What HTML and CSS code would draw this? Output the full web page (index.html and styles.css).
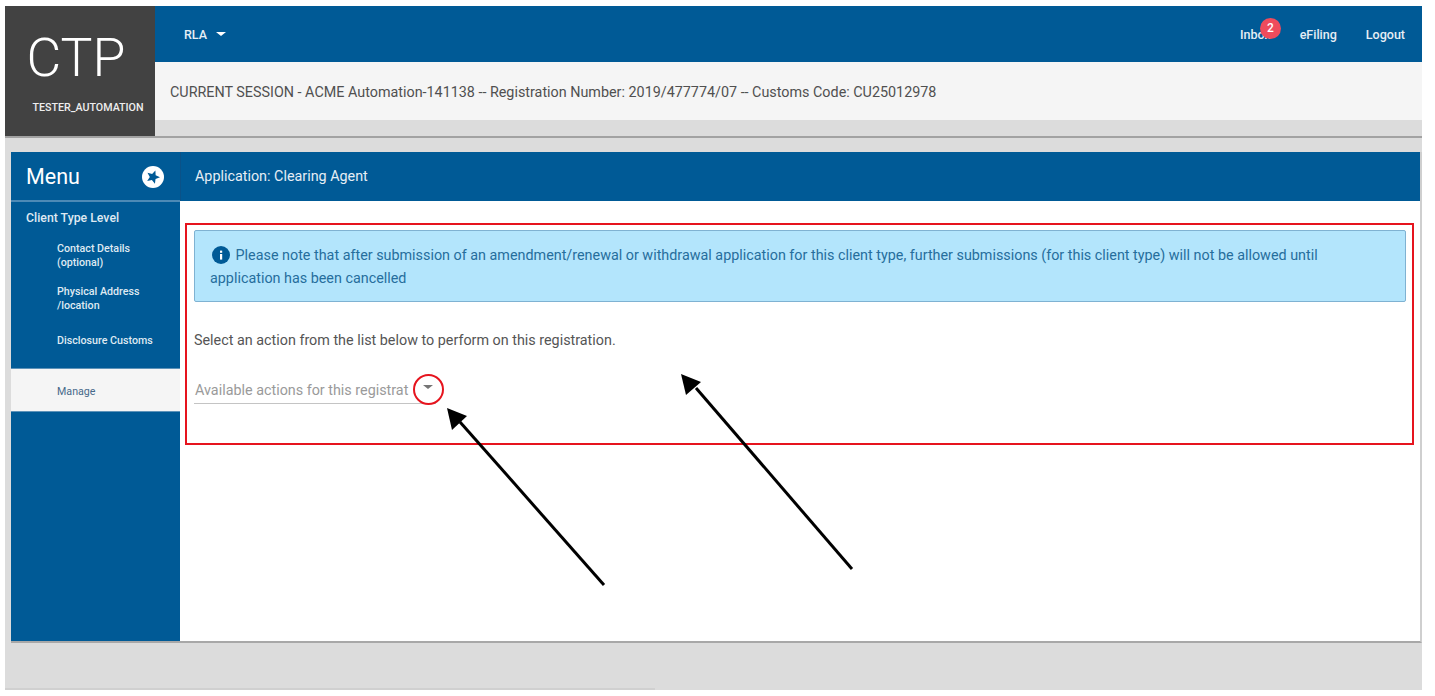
FILE: index.html
```html
<!DOCTYPE html>
<html lang="en">
<head>
<meta charset="utf-8">
<title>CTP - Application: Clearing Agent</title>
<link rel="stylesheet" href="styles.css">
</head>
<body>
<div class="frame">
  <header class="header">
    <div class="logo">
      <div class="logo-title">CTP</div>
      <div class="logo-user">TESTER_AUTOMATION</div>
    </div>
    <div class="header-main">
      <nav class="topbar">
        <div class="rla">RLA <span class="caret caret-white"></span></div>
        <div class="top-links">
          <span class="inbox">Inbox<span class="badge">2</span></span>
          <span>eFiling</span>
          <span>Logout</span>
        </div>
      </nav>
      <div class="session">CURRENT SESSION - ACME Automation-141138 -- Registration Number: 2019/477774/07 -- Customs Code: CU25012978</div>
      <div class="header-strip"></div>
    </div>
  </header>

  <div class="card">
    <aside class="sidebar">
      <div class="menu-head">
        <span class="menu-title">Menu</span>
        <svg class="pin" viewBox="0 0 24 24" width="24" height="24" aria-hidden="true">
          <circle cx="12" cy="12" r="11" fill="#fff"/>
          <path d="M14.39 5.42 14.65 10.21 19 12.24 14.52 13.97 13.93 18.73 10.91 15.01 6.2 15.91 8.8 11.89 6.48 7.69 11.12 8.92z" fill="#005a96"/>
        </svg>
      </div>
      <div class="menu-group">Client Type Level</div>
      <ul class="menu-list">
        <li class="item-contact">Contact Details<br>(optional)</li>
        <li class="item-address">Physical Address<br>/location</li>
        <li class="item-disclosure">Disclosure Customs</li>
        <li class="item-active">Manage</li>
      </ul>
    </aside>
    <main class="content">
      <div class="title-bar">Application: Clearing Agent</div>
      <div class="body">
        <div class="notice">
          <svg class="info" viewBox="0 0 18 18" width="18" height="18" aria-hidden="true">
            <circle cx="9" cy="9" r="9" fill="#005a96"/>
            <rect x="8" y="8" width="2.2" height="5.6" fill="#fff"/>
            <rect x="8" y="4.6" width="2.2" height="2.2" fill="#fff"/>
          </svg>
          Please note that after submission of an amendment/renewal or withdrawal application for this client type, further submissions (for this client type) will not be allowed until application has been cancelled
        </div>
        <p class="lead">Select an action from the list below to perform on this registration.</p>
        <div class="select">
          <span class="select-text">Available actions for this registrat</span>
          <span class="caret caret-grey"></span>
        </div>
      </div>
    </main>
  </div>
  <div class="frame-edge"></div>
</div>

<div class="annotation-box"></div>
<div class="annotation-circle"></div>
<svg class="annotation-arrows" viewBox="0 0 1435 696" width="1435" height="696" aria-hidden="true">
  <path d="M604 585 460 422" stroke="#000" stroke-width="3" fill="none"/>
  <path d="M447 408 467 416 452 430z" fill="#000"/>
  <path d="M852 569 696 388" stroke="#000" stroke-width="3" fill="none"/>
  <path d="M681 374 701 382 686 395z" fill="#000"/>
</svg>
</body>
</html>
```

FILE: styles.css
```css
* { box-sizing: border-box; }

html, body { margin: 0; height: 100%; }

body {
  position: relative;
  width: 1435px;
  height: 696px;
  overflow: hidden;
  background: #fff;
  font-family: Roboto, "Liberation Sans", sans-serif;
  color: #444;
}

.frame {
  width: 1417px;
  height: 684px;
  margin: 6px 0 0 5px;
  background: #dcdcdc;
  display: flex;
  flex-direction: column;
}

.header {
  display: flex;
  height: 132px;
  flex: none;
  border-bottom: 2px solid #a2a2a2;
}

.logo {
  width: 150px;
  flex: none;
  background: #424242;
  color: #fff;
  display: flex;
  flex-direction: column;
  align-items: center;
}

.logo-title {
  margin-top: 21px;
  margin-right: 8px;
  font-size: 53.5px;
  line-height: 62px;
  font-weight: 300;
}

.logo-user {
  margin-top: 12px;
  margin-left: 16px;
  font-size: 10.7px;
  line-height: 14px;
  font-weight: 500;
  color: #eee;
}

.header-main {
  flex: 1;
  display: flex;
  flex-direction: column;
}

.topbar {
  height: 56px;
  flex: none;
  background: #005a96;
  color: #e6eef5;
  font-size: 12.5px;
  font-weight: 500;
  display: flex;
  align-items: center;
  justify-content: space-between;
  padding: 0 17px 0 29px;
}

.rla { display: flex; align-items: center; gap: 6px; }

.caret {
  display: inline-block;
  width: 0;
  height: 0;
  border-left: 5px solid transparent;
  border-right: 5px solid transparent;
  border-top: 4px solid #fff;
}

.caret-white { margin-left: 3px; }

.top-links { display: flex; gap: 29px; }

.inbox { position: relative; }

.badge {
  position: absolute;
  left: 20px;
  top: -9px;
  width: 21px;
  height: 21px;
  border-radius: 50%;
  background: #ef4b5c;
  color: #fff;
  font-size: 12px;
  line-height: 20px;
  text-align: center;
}

.session {
  height: 58px;
  flex: none;
  background: #f5f5f5;
  color: #505050;
  font-size: 14.35px;
  line-height: 61px;
  padding-left: 15px;
}

.header-strip { flex: 1; background: #dcdcdc; }

.card {
  display: flex;
  width: 1411px;
  height: 491px;
  margin: 14px 0 0 6px;
  background: #fff;
  border-bottom: 2px solid #a8a8a8;
  border-right: 2px solid #cfcfcf;
  flex: none;
}

.sidebar {
  width: 169px;
  flex: none;
  background: #005a96;
  color: #dfe9f2;
}

.menu-head {
  height: 50px;
  display: flex;
  align-items: center;
  justify-content: space-between;
  padding: 1px 15px 0;
  border-bottom: 2px solid #4d8ab6;
}

.menu-title { color: #fff; font-size: 21.5px; }

.menu-group {
  font-size: 12.3px;
  font-weight: 500;
  line-height: 14px;
  padding: 9px 0 0 15px;
}

.menu-list {
  list-style: none;
  margin: 0;
  padding: 0;
  font-size: 10.7px;
  font-weight: 500;
  line-height: 14px;
}

.menu-list li { padding-left: 46px; }

.item-contact { margin-top: 17px; }
.item-address { margin-top: 15px; }
.item-disclosure { margin-top: 21px; }

.item-active {
  margin-top: 20px;
  height: 44px;
  background: #f5f5f5;
  color: #47698a;
  line-height: 45px;
  font-weight: 400;
  border-top: 1px solid #5e93b9;
  border-bottom: 1px solid #5e93b9;
}

.content {
  flex: 1;
  display: flex;
  flex-direction: column;
  min-width: 0;
}

.title-bar {
  height: 49px;
  flex: none;
  background: #005a96;
  color: #e6eef5;
  font-size: 14.35px;
  line-height: 49px;
  padding-left: 14px;
  border-left: 1px solid #0a5288;
}

.body { padding: 29px 14px 0 14px; }

.notice {
  height: 72px;
  background: #b3e5fc;
  border: 1px solid #7fb2d2;
  border-radius: 2px;
  color: #266e9c;
  font-size: 14.35px;
  line-height: 23px;
  padding: 13px 60px 0 15px;
}

.info {
  vertical-align: -4px;
  margin: 0 2px 0 2px;
}

.lead {
  margin: 29px 0 0;
  font-size: 14.35px;
  line-height: 20px;
  color: #555;
}

.select {
  width: 242px;
  height: 35px;
  margin-top: 18px;
  border-bottom: 1px solid #c4c4c4;
  display: flex;
  align-items: center;
  justify-content: space-between;
  padding: 8px 0 0 1px;
}

.select-text {
  font-size: 14.35px;
  color: #9a9a9a;
  white-space: nowrap;
}

.caret-grey { border-top-color: #757575; margin: 0 3px 6px 0; }

.frame-edge {
  width: 650px;
  height: 2px;
  margin-top: auto;
  background: #d0d0d0;
}

.annotation-box {
  position: absolute;
  left: 185px;
  top: 223px;
  width: 1229px;
  height: 222px;
  border: 2px solid #e6141e;
}

.annotation-circle {
  position: absolute;
  left: 413px;
  top: 374px;
  width: 31px;
  height: 31px;
  border: 2px solid #e6141e;
  border-radius: 50%;
}

.annotation-arrows {
  position: absolute;
  left: 0;
  top: 0;
}
```
